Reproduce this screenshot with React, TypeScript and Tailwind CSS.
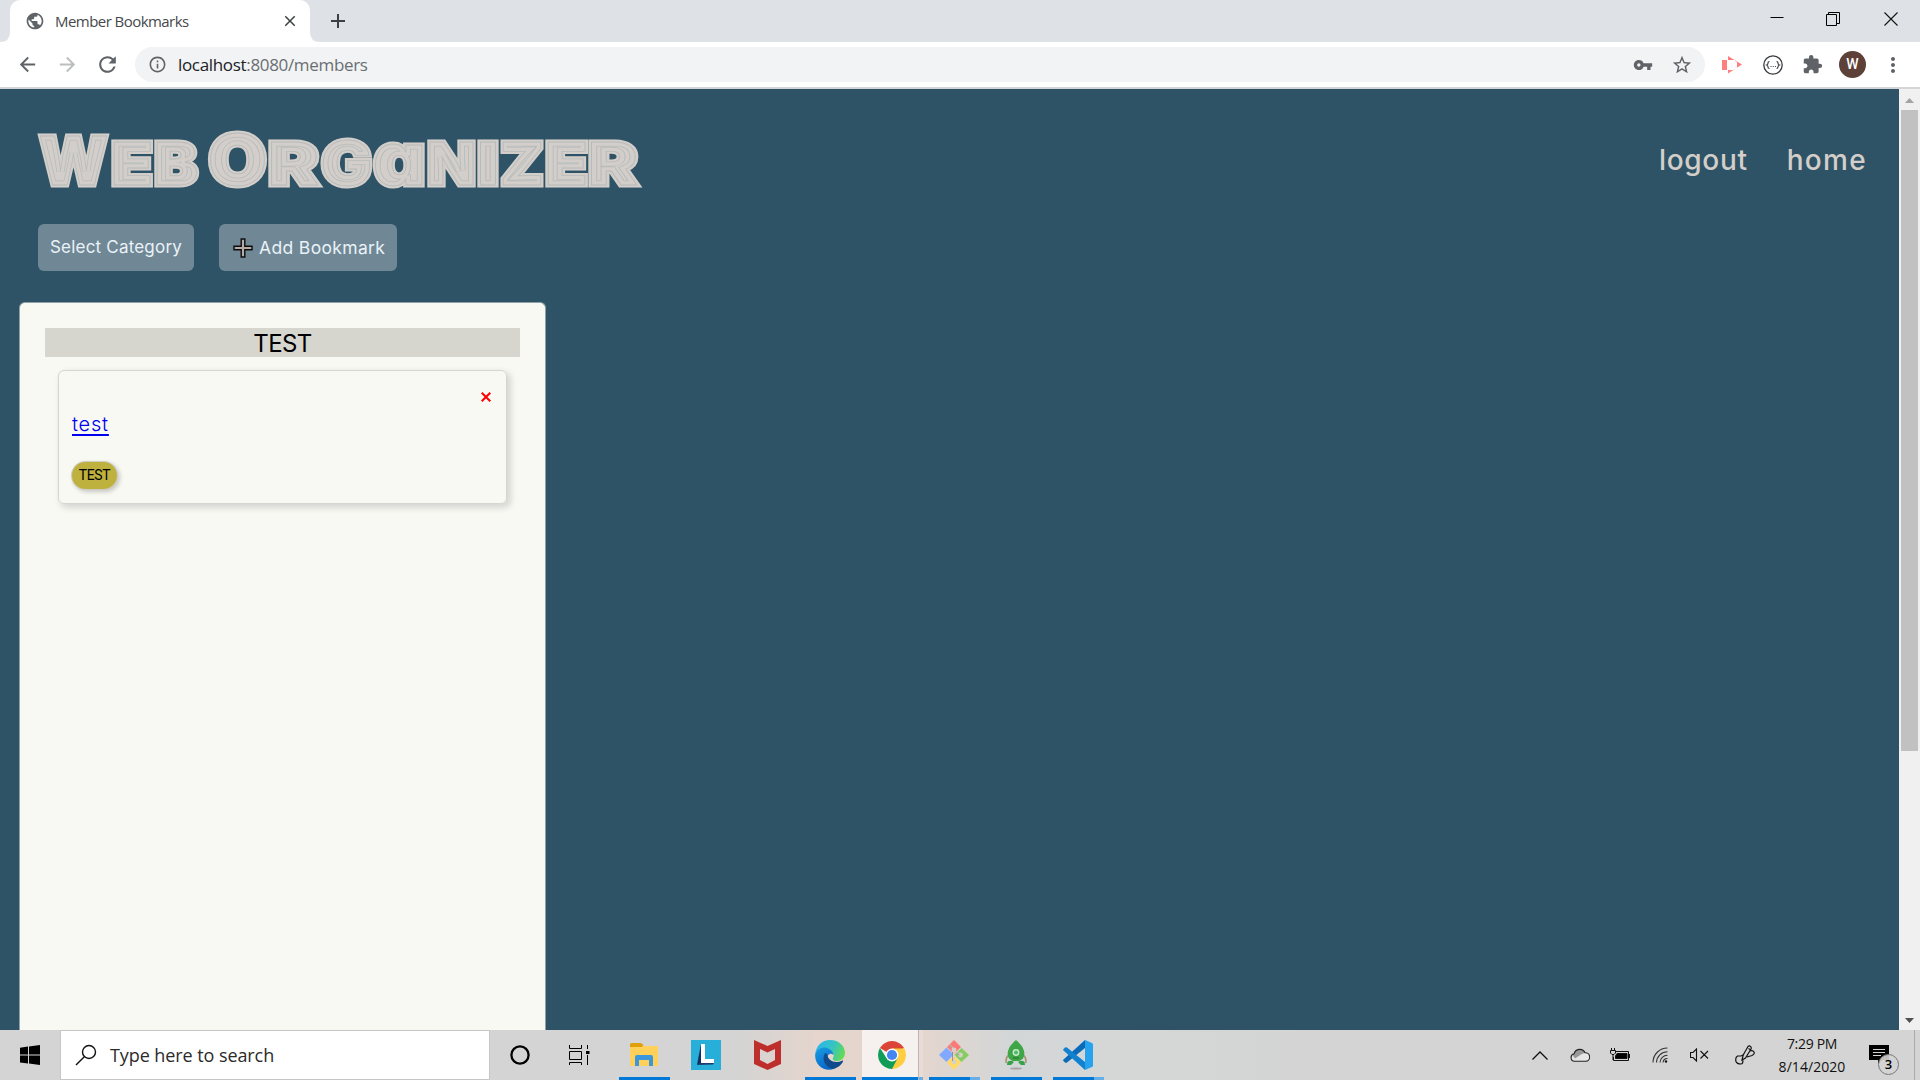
import React from "react";
import {
  MdAdd,
  MdArrowBack,
  MdArrowForward,
  MdClose,
  MdExtension,
  MdInfoOutline,
  MdMoreVert,
  MdPublic,
  MdRefresh,
  MdStarBorder,
  MdVpnKey,
} from "react-icons/md";

const LOGO_LETTERS = [
  { ch: "W", x: 39, w: 69, size: 68 },
  { ch: "E", x: 111, w: 42, size: 59 },
  { ch: "B", x: 154, w: 44, size: 59 },
  { ch: "O", x: 208, w: 59, size: 70 },
  { ch: "R", x: 268, w: 51, size: 59 },
  { ch: "G", x: 321, w: 51, size: 60 },
  { ch: "a", x: 373, w: 53, size: 74 },
  { ch: "N", x: 427, w: 49, size: 59 },
  { ch: "I", x: 477, w: 22, size: 59 },
  { ch: "Z", x: 500, w: 44, size: 59 },
  { ch: "E", x: 545, w: 43, size: 59 },
  { ch: "R", x: 588, w: 50, size: 59 },
];

function Logo() {
  return (
    <svg width="620" height="72" viewBox="30 124 620 72" className="block">
      <defs>
        <text
          id="logo-text"
          y="185"
          fontFamily="Inter"
          fontWeight="900"
          className="[font-feature-settings:'cv11','ss03']"
        >
          {LOGO_LETTERS.map((l, i) => (
            <tspan key={i} x={l.x} fontSize={l.size} textLength={l.w} lengthAdjust="spacingAndGlyphs">
              {l.ch}
            </tspan>
          ))}
        </text>
        <clipPath id="logo-clip">
          <use href="#logo-text" />
        </clipPath>
      </defs>
      <use href="#logo-text" fill="#d3cec9" stroke="#d3cec9" strokeWidth="5" />
      <g clipPath="url(#logo-clip)">
        <use href="#logo-text" fill="none" stroke="#b6bcbc" strokeWidth="9" />
        <use href="#logo-text" fill="none" stroke="#d3cec9" strokeWidth="7.400" />
      </g>
      <use href="#logo-text" fill="none" stroke="#b6bcbc" strokeWidth="0.8" />
    </svg>
  );
}

function TabBar() {
  return (
    <div className="flex h-[42px] items-end bg-[#dee1e6]">
      <div className="flex h-full w-[10px] items-end">
        <svg width="10" height="10" fill="#fff"><path d="M10 0v10H0Q10 10 10 0z" /></svg>
      </div>
      <div className="flex h-full w-[300px] items-center rounded-t-[10px] bg-white pl-[15px] pr-[11px]">
        <MdPublic className="size-[20px] text-[#5f6368]" />
        <span className="ml-[10px] flex-1 whitespace-nowrap font-['Open_Sans'] text-[15px] tracking-[-0.550px] text-[#45494d]">
          Member Bookmarks
        </span>
        <MdClose className="size-[18px] text-[#3c4043]" />
      </div>
      <div className="flex h-full w-[10px] items-end">
        <svg width="10" height="10" fill="#fff"><path d="M0 0v10h10Q0 10 0 0z" /></svg>
      </div>
      <div className="flex h-full w-[35px] items-center justify-center">
        <MdAdd className="size-[24px] text-[#3c4043]" />
      </div>
      <div className="flex h-full flex-1 items-center justify-end pb-[5px] pr-[22px]">
        <svg width="14" height="14" className="mr-[42px]" stroke="#000" strokeWidth="1">
          <path d="M0.5 5.5h13" />
        </svg>
        <svg width="14" height="14" className="mr-[44px]" fill="none" stroke="#000" strokeWidth="1">
          <path d="M0.5 2.5h10v11h-10zM2.500 2.5v-2h11v11h-3" />
        </svg>
        <svg width="14" height="14" fill="none" stroke="#111" strokeWidth="1.1">
          <path d="M0.500 0.500l13 13M13.500 0.500l-13 13" />
        </svg>
      </div>
    </div>
  );
}

function Toolbar() {
  return (
    <div className="flex h-[47px] items-center border-b-2 border-[#d4d5d8] bg-white">
      <MdArrowBack className="ml-[16px] size-[23px] text-[#5f6368]" />
      <MdArrowForward className="ml-[17px] size-[23px] text-[#bbbdbf]" />
      <MdRefresh className="ml-[16px] size-[25px] text-[#5f6368]" />
      <div className="ml-[15px] flex h-[35px] w-[1570px] items-center rounded-full bg-[#f1f3f4] pl-[13px] pr-[12px]">
        <MdInfoOutline className="size-[19px] text-[#5f6368]" />
        <span className="ml-[11px] flex-1 whitespace-nowrap font-['Open_Sans'] text-[17px] tracking-[-0.330px] text-[#6a6e72]">
          <span className="text-[#202124]">localhost</span>:8080/members
        </span>
        <MdVpnKey className="size-[20px] text-[#5f6368]" />
        <MdStarBorder className="ml-[18px] size-[22px] text-[#5f6368]" />
      </div>
      <svg width="20" height="18" viewBox="0 0 20 18" className="ml-[17px]" fill="#ff7f7f">
        <path d="M0 4h5v10H0z" />
        <path d="M6 0l14 8.500L6 17.500V14h7v-2h2V6h-2V4H6z" />
        <path d="M12 4l3 2v2h-3zM12 10h3v2l-3 2z" fill="#fff" />
      </svg>
      <svg width="20" height="20" viewBox="0 0 20 20" className="ml-[21px]" fill="none" stroke="#3a3d40">
        <circle cx="10" cy="10" r="9.2" strokeWidth="1.300" />
        <path d="M6.500 6.500q-1.500 0-1.500 1.500t-1.300 2q1.300.500 1.300 2t1.500 1.500M13.500 6.500q1.500 0 1.500 1.500t1.300 2q-1.300.500-1.300 2t-1.500 1.500" strokeWidth="1.200" />
        <path d="M7.500 11.500h1M9.700 11.500h1M11.900 11.500h1" strokeWidth="1" />
      </svg>
      <MdExtension className="ml-[19px] size-[21px] text-[#5f6368]" />
      <div className="ml-[16px] flex size-[27px] items-center justify-center rounded-full bg-[#5d4037] font-[Roboto] text-[14px] font-medium text-white">
        W
      </div>
      <MdMoreVert className="ml-[15px] size-[24px] text-[#5f6368]" />
    </div>
  );
}

function PageScrollbar() {
  return (
    <div className="flex w-[21px] flex-col items-center bg-[#f0f0f0]">
      <div className="flex h-[21px] items-center justify-center pt-[2px]">
        <svg width="9" height="5" fill="#a3a3a3"><path d="M4.500 0L9 5H0z" /></svg>
      </div>
      <div className="h-[641px] w-[17px] bg-[#c1c1c1]" />
      <div className="mt-auto flex h-[20px] items-center justify-center">
        <svg width="9" height="5" fill="#505050"><path d="M4.500 5L9 0H0z" /></svg>
      </div>
    </div>
  );
}

function BookmarkCard() {
  return (
    <div className="mx-[13px] mt-[13px] flex h-[134px] flex-col rounded-[6px] border border-[#d6d5ce] px-[12px] shadow-[3px_3px_6px_1px_rgba(0,0,0,0.14)]">
      <svg width="10" height="10" className="mr-[3px] mt-[21px] shrink-0 self-end" stroke="#f00" strokeWidth="2">
        <path d="M0.700 0.700l8.600 8.600M9.300 0.700l-8.600 8.600" />
      </svg>
      <a className="ml-px mt-[8px] h-[28px] self-start font-[Inter] text-[20px] font-light leading-[28px] tracking-[0.800px] text-[#0000ee] underline decoration-[1.5px] underline-offset-[3px]">
        test
      </a>
      <span className="ml-px mt-[24px] flex h-[27px] w-[45px] items-center justify-center rounded-full bg-[#bfb13e] font-[Roboto] text-[14px] tracking-[-0.400px] text-black shadow-[0_0_0_1px_#cfccc0,2px_2px_4px_1px_rgba(0,0,0,0.2)]">
        TEST
      </span>
    </div>
  );
}

function MembersPage() {
  return (
    <main className="flex min-w-0 flex-1 flex-col bg-[#2e5366]">
      <header className="flex items-center justify-between pl-[30px] pr-[32px] pt-[35px]">
        <Logo />
        <nav className="flex gap-[39px] font-[Inter] text-[28px] font-medium leading-[42px] text-[#d3cec9]">
          <a className="tracking-[0.700px]">logout</a>
          <a className="tracking-[1.300px]">home</a>
        </nav>
      </header>
      <div className="ml-[38px] mt-[28px] flex h-[47px] gap-[25px] font-[Inter] text-[17px] text-[#eaf2f6]">
        <button className="w-[156px] whitespace-nowrap rounded-[6px] bg-[#708896] tracking-[0.200px]">Select Category</button>
        <button className="flex w-[178px] items-center whitespace-nowrap rounded-[6px] bg-[#708896] pl-[14px] pt-px tracking-[0.350px]">
          <svg width="20" height="20" className="mr-[6px]" fill="#b5aca6" stroke="#0c0c0c" strokeWidth="1.400">
            <path d="M8.200 1h3.600v7.200H19v3.600h-7.200V19H8.200v-7.200H1V8.200h7.200z" />
          </svg>
          <span className="text-[17.500px]">Add Bookmark</span>
        </button>
      </div>
      <section className="ml-[19px] mt-[31px] flex min-h-0 w-[527px] flex-1 flex-col rounded-t-[6px] border border-b-0 border-[#8fa1a8] bg-[#f9f9f4] px-[25px] pt-[25px]">
        <h2 className="h-[29px] bg-[#d6d5ce] text-center font-[Inter] text-[24px] leading-[31px] tracking-[-0.600px] text-black">
          TEST
        </h2>
        <BookmarkCard />
      </section>
    </main>
  );
}

function Task({ children, main = "w-[51px]", extra = "w-0", running = true }: {
  children: React.ReactNode;
  main?: string;
  extra?: string;
  running?: boolean;
}) {
  return (
    <div className="flex h-full flex-col">
      <div className="flex flex-1 items-center justify-center pr-px pt-[3px]">{children}</div>
      <div className="flex h-[3px]">
        <div className={`${main} ${running ? "bg-[#0078d7]" : ""}`} />
        <div className={`${extra} bg-[#66aee8]`} />
      </div>
    </div>
  );
}

function FolderIcon() {
  return (
    <svg width="28" height="24" viewBox="0 0 28 24">
      <path d="M0 3h28v20H0z" fill="#ffd05a" />
      <path d="M0 1.500Q0 0 1.500 0H11l2.500 2-1.500 2H0z" fill="#dfa00c" />
      <path d="M5 23v-9q0-2 2-2h14q2 0 2 2v9h-4v-6h-10v6z" fill="#3a97dc" />
    </svg>
  );
}

function LTileIcon() {
  return (
    <div className="flex size-[30px] bg-[#27aed9]">
      <svg width="30" height="30">
        <path d="M10 4L6 25l6-2z" fill="#12305f" />
        <path d="M10 4h4v15h9v4H10z" fill="#fff" />
        <path d="M6 25l4-2h13l-1 1.500z" fill="#1a3c70" />
      </svg>
    </div>
  );
}

function ShieldIcon() {
  return (
    <svg width="27" height="30" viewBox="0 0 27 30">
      <path fillRule="evenodd" fill="#be2e2c" d="M0 0l13.500 6L27 0v24l-13.500 6L0 24zM6 9v11l7.500 4 7.500-4V9l-7.500 3.500z" />
    </svg>
  );
}

function EdgeIcon() {
  return (
    <svg width="30" height="30" viewBox="0 0 30 30">
      <defs>
        <linearGradient id="edge-top" x1="0" y1="0.300" x2="1" y2="0.600">
          <stop offset="0" stopColor="#2bb5ec" />
          <stop offset="0.550" stopColor="#34c4c3" />
          <stop offset="1" stopColor="#65dc4f" />
        </linearGradient>
        <linearGradient id="edge-left" x1="0" y1="0" x2="0.500" y2="1">
          <stop offset="0" stopColor="#1a9de4" />
          <stop offset="1" stopColor="#0768c8" />
        </linearGradient>
      </defs>
      <path fill="url(#edge-top)" d="M0.300 14C1 6 7 0 15 0c9 0 15 6 15 13 0 5-4 8-8 8-3 0-5-1-4-3 2-3 0-7-5-8C7 8.500 2 10 0.300 14z" />
      <path fill="url(#edge-left)" d="M0.200 14C3 8 9 6 14 9c3 1.500 4.500 4 4.500 6-3-3-7 0-6.500 5 .5 4 3.500 7 7.500 8.500C10 33-.8 25 .2 14z" />
      <path fill="#114a8b" d="M10 13c-4 7 1 15 8 16 4-.7 8-3.500 10-7.500.4-1-.5-1.200-1-.8-7 3.500-15-.7-14.500-6.500z" />
    </svg>
  );
}

function ChromeIcon() {
  return (
    <svg width="28" height="28" viewBox="0 0 28 28" className="ml-[4px]">
      <path d="M14 14L1.900 7A14 14 0 0 1 26.100 7z" fill="#db4437" />
      <path d="M14 14L26.100 7A14 14 0 0 1 14 28z" fill="#ffcd40" />
      <path d="M14 7.500h12.300L20 17.500z" fill="#ffcd40" />
      <path d="M1.900 7l6.600 10 11.100.200L14 28A14 14 0 0 1 1.900 7z" fill="#0f9d58" />
      <circle cx="14" cy="14" r="6.500" fill="#fff" />
      <circle cx="14" cy="14" r="5.100" fill="#4285f4" />
    </svg>
  );
}

function GitIcon() {
  return (
    <svg width="30" height="30" viewBox="0 0 30 30">
      <path d="M15 0l7 7-7 7-7-7z" fill="#fb7a78" />
      <path d="M7.500 7.500l7 7-7 7.500-7.500-7z" fill="#80a9ff" />
      <path d="M22.500 8l7.500 7-7.500 7-7-7z" fill="#86cd61" />
      <path d="M15 15.500l7 7-7 7.500-7-7.500z" fill="#ffdb64" />
      <g stroke="#d8d0c8" strokeWidth="1.600" fill="#d8d0c8">
        <path d="M11 5l4 5v12M15 10l6 5" fill="none" />
        <circle cx="15" cy="10" r="1.600" />
        <circle cx="21.500" cy="15" r="1.600" />
        <circle cx="15" cy="22" r="1.600" />
      </g>
      <path d="M13 8l-2-3M17.500 13l3 2M13.500 12v9" stroke="#8b8580" strokeWidth="0.800" fill="none" />
    </svg>
  );
}

function RocketIcon() {
  return (
    <svg width="22" height="30" viewBox="0 0 22 30">
      <ellipse cx="11" cy="28.500" rx="6" ry="1.100" fill="#a5a5a5" />
      <path d="M4 15q-4 3-2.500 8M18 15q4 3 2.500 8" fill="none" stroke="#a99877" strokeWidth="1.800" />
      <path d="M11 0c8 7 10 13 7 18.500L14.500 21h-7L4 18.500C1 13 3 7 11 0z" fill="#3fa648" />
      <path d="M2 25q0-5 5-4l2 1-3 3zM20 25q0-5-5-4l-2 1 3 3z" fill="#36a34a" />
      <circle cx="11" cy="12.500" r="3.400" fill="#c7edcf" />
      <circle cx="11" cy="12.500" r="2.100" fill="#5ab86c" />
      <path d="M8 18h6" stroke="#267b32" strokeWidth="1.200" />
    </svg>
  );
}

function CodeIcon() {
  return (
    <svg width="30" height="30" viewBox="0 0 30 30">
      <path d="M0.500 19.500L22 0v8L4 22.500q-1 .7-2 0L.5 21q-.8-.8 0-1.500z" fill="#0a6cb8" />
      <path d="M0.500 10.500L22 30v-8L4 7.500q-1-.7-2 0L.5 9q-.8.800 0 1.500z" fill="#1182cf" />
      <path d="M22 0l7 3q1 .5 1 1.500v21q0 1-1 1.500l-7 3z" fill="#27a2ef" />
    </svg>
  );
}

function Tray() {
  return (
    <div className="ml-auto flex h-full items-center">
      <svg width="16" height="9" className="mr-[22px]" fill="none" stroke="#111" strokeWidth="1.300">
        <path d="M0.500 8.500L8 1l7.500 7.500" />
      </svg>
      <svg width="20" height="14" viewBox="0 0 20 14" className="mr-[20px]">
        <path d="M4.500 13.300a3.800 3.800 0 0 1-.4-7.500A5.800 5.800 0 0 1 15 4.700a4.300 4.300 0 0 1 .7 8.600z" fill="#e6e6e6" />
        <path d="M2 6.500l2-1A5.800 5.800 0 0 1 15 4.700l-4 1.700-6 4z" fill="#999" />
        <path d="M4.500 13.300a3.800 3.800 0 0 1-.4-7.500A5.800 5.800 0 0 1 15 4.700a4.300 4.300 0 0 1 .7 8.600z" fill="none" stroke="#222" strokeWidth="1.100" />
      </svg>
      <svg width="20" height="14" className="mr-[22px]" fill="none" stroke="#111">
        <path d="M6 3.500h12.500v9H3.500V9" />
        <path d="M7 5.500h10v5H5.500V8z" fill="#000" />
        <path d="M19.500 6v4M1.500 0v2.500M4.500 0v2.500M0.500 2.500h5v2.500l-1.500 1.500H2L.5 5zM3 6v6" />
      </svg>
      <svg width="16" height="16" className="mr-[22px]" fill="none" stroke="#333" strokeWidth="1.100">
        <path d="M1 15.500A14.500 14.500 0 0 1 15.500 1M4.500 15.500A11 11 0 0 1 15.500 4.700M8 15.500A7.500 7.500 0 0 1 15.500 8.300M11 15.500A4.500 4.500 0 0 1 15.500 11.500" />
        <circle cx="14" cy="14.500" r="1.200" fill="#111" stroke="none" />
      </svg>
      <svg width="19" height="14" className="mr-[26px]" fill="none" stroke="#111" strokeWidth="1.100">
        <path d="M0.500 4.500h2.500l3.500-3.500v12L3 9.500H.5zM10.500 3l7.500 7.500M18 3l-7.500 7.500" />
      </svg>
      <svg width="20" height="20" className="mr-[22px]" fill="none" stroke="#111" strokeWidth="1.200">
        <path d="M7 15l1.200-5L13 1.500q1.500-1.500 3 .5.500 1 0 2L10.500 13zM9 9.500L6 11H2.500Q0 12.500 1 16.500q1 2.500 5 2.500 2 0 2-3.500M12 12l5-1.500q3-1.500 2-3.500t-4-1M13.500 3.500l1.500 1" />
      </svg>
      <div className="flex w-[70px] flex-col items-center whitespace-nowrap font-['Open_Sans'] text-[14px] leading-[23px] text-[#111]">
        <span className="tracking-[-0.300px]">7:29 PM</span>
        <span className="tracking-[0.050px]">8/14/2020</span>
      </div>
      <div className="relative ml-[22px] h-[20px] w-[45px]">
        <svg width="20" height="20" fill="#000">
          <path d="M0 0h20v15h-7l-4 4v-4H0z" />
          <path d="M4 4.500h12M4 7.500h12M4 10.500h8" stroke="#d4d4d4" strokeWidth="1.100" />
        </svg>
        <div className="absolute left-[9px] top-[9px] flex size-[21px] items-center justify-center rounded-full border border-[#777] bg-[#d4d4d4]/90 font-['Open_Sans'] text-[13px] font-semibold text-black">
          3
        </div>
      </div>
      <div className="mr-[5px] h-full w-px bg-[#aaa]" />
    </div>
  );
}

function Taskbar() {
  return (
    <div className="flex h-[50px] items-center bg-[#d4d4d4] bg-[linear-gradient(90deg,#d4d4d4_0px,#d4d4d4_740px,#e5d5cc_820px,#e2d6cf_930px,#d3d6d7_1010px,#d5d7d7_1100px,#d4d4d4_1300px)]">
      <div className="flex w-[60px] justify-center">
        <svg width="20" height="20" fill="#000">
          <path d="M0 2.700L8 1.600V9.500H0zM9 1.500L20 0v9.500H9zM0 10.500h8v8l-8-1.100zM9 10.500h11V20L9 18.500z" />
        </svg>
      </div>
      <div className="flex h-full w-[430px] items-center border border-[#c6c6c6] bg-white pl-[14px]">
        <svg width="22" height="22" fill="none" stroke="#111" strokeWidth="1.400">
          <circle cx="14" cy="8" r="6.500" />
          <path d="M9.300 12.700L1 21" />
        </svg>
        <span className="ml-[13px] whitespace-nowrap font-['Open_Sans'] text-[18px] tracking-[-0.080px] text-[#2b2b2b]">
          Type here to search
        </span>
      </div>
      <div className="flex w-[60px] justify-center">
        <svg width="20" height="20" fill="none" stroke="#000" strokeWidth="2.300">
          <circle cx="10" cy="10" r="8.600" />
        </svg>
      </div>
      <div className="flex w-[59px] justify-center">
        <svg width="21" height="20" fill="none" stroke="#000" strokeWidth="1">
          <path d="M0.500 0v3.500h12V0M0.500 6.500h12v8h-12zM0.500 20v-2.500h12V20M18.500 0v4M18.500 10v10" />
          <path d="M17 6h3.500v3H17z" fill="#000" stroke="none" />
        </svg>
      </div>
      <div className="ml-[10px] flex h-full">
        <Task><FolderIcon /></Task>
        <div className="ml-[11px] flex"><Task running={false}><LTileIcon /></Task></div>
        <div className="ml-[10px] flex"><Task running={false}><ShieldIcon /></Task></div>
        <div className="ml-[12px] flex"><Task><EdgeIcon /></Task></div>
        <div className="ml-[6px] flex bg-white/65">
          <Task main="w-[56px]"><ChromeIcon /></Task>
          <div className="flex w-[5px] flex-col border-l border-[#bfb5b0] bg-[#e9dcd6]">
            <div className="mt-auto h-[3px] bg-[#66aee8]" />
          </div>
        </div>
        <div className="ml-[6px] flex"><Task main="w-[41px]" extra="w-[10px]"><GitIcon /></Task></div>
        <div className="ml-[11px] flex"><Task><RocketIcon /></Task></div>
        <div className="ml-[11px] flex"><Task main="w-[41px]" extra="w-[10px]"><CodeIcon /></Task></div>
      </div>
      <Tray />
    </div>
  );
}

export default function App() {
  return (
    <div className="flex h-[1080px] w-[1920px] flex-col overflow-hidden">
      <TabBar />
      <Toolbar />
      <div className="flex min-h-0 flex-1">
        <MembersPage />
        <PageScrollbar />
      </div>
      <Taskbar />
    </div>
  );
}
